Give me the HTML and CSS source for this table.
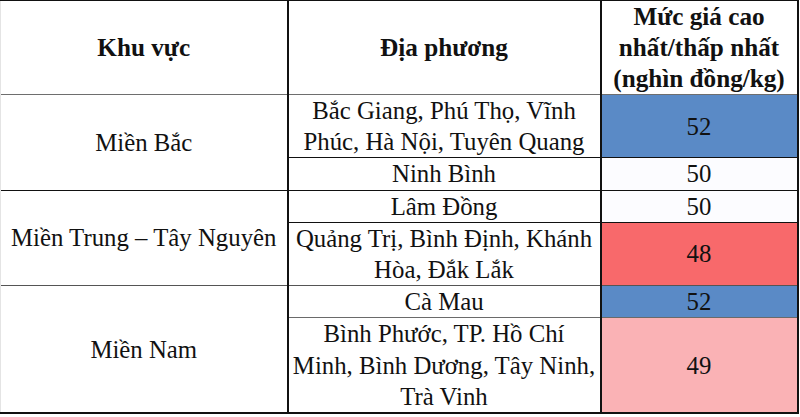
FILE: index.html
```html
<!DOCTYPE html>
<html lang="vi">
<head>
<meta charset="utf-8">
<link rel="stylesheet" href="styles.css">
</head>
<body>
<table class="price-table">
  <colgroup>
    <col class="c-region">
    <col class="c-local">
    <col class="c-price">
  </colgroup>
  <thead>
    <tr class="r-head">
      <th>Khu vực</th>
      <th>Địa phương</th>
      <th>Mức giá cao<br>nhất/thấp nhất<br>(nghìn đồng/kg)</th>
    </tr>
  </thead>
  <tbody>
    <tr>
      <td rowspan="2" class="region">Miền Bắc</td>
      <td>Bắc Giang, Phú Thọ, Vĩnh<br>Phúc, Hà Nội, Tuyên Quang</td>
      <td class="price p-max">52</td>
    </tr>
    <tr>
      <td>Ninh Bình</td>
      <td class="price p-mid">50</td>
    </tr>
    <tr class="grp">
      <td rowspan="2" class="region">Miền Trung – Tây Nguyên</td>
      <td>Lâm Đồng</td>
      <td class="price p-mid">50</td>
    </tr>
    <tr>
      <td>Quảng Trị, Bình Định, Khánh<br>Hòa, Đắk Lắk</td>
      <td class="price p-min">48</td>
    </tr>
    <tr class="grp grp-gray">
      <td rowspan="2" class="region">Miền Nam</td>
      <td>Cà Mau</td>
      <td class="price p-max">52</td>
    </tr>
    <tr class="sep-gray">
      <td>Bình Phước, TP. Hồ Chí<br>Minh, Bình Dương, Tây Ninh,<br>Trà Vinh</td>
      <td class="price p-low">49</td>
    </tr>
  </tbody>
</table>
</body>
</html>
```

FILE: styles.css
```css
html, body {
  margin: 0;
  padding: 0;
  background: #ffffff;
  font-family: "Liberation Serif", serif;
}

.price-table {
  table-layout: fixed;
  border-collapse: collapse;
  width: 797px;
  font-family: "Liberation Serif", serif;
  color: #111111;
  font-size: 24.8px;
  line-height: 31.2px;
  text-align: center;
  border-left: 1px solid #e4e4e4;
  border-top: 1px solid #ececec;
  border-right: 2px solid #111111;
  border-bottom: 2px solid #111111;
}

.c-region { width: 287px; }
.c-local { width: 313px; }
.c-price { width: 197px; }

th, td {
  padding: 0;
  vertical-align: middle;
  text-align: center;
  border-left: 2px solid #111111;
  border-top: 1px solid #111111;
}

th:first-child, .region {
  border-left: 1px solid #e4e4e4;
}

th {
  font-weight: bold;
  font-size: 25.2px;
  line-height: 31px;
}

tbody tr:first-child td {
  border-top: 1px solid #6e6e6e;
}

.sep-gray td {
  border-top: 1px solid #6a6a6a;
}

.grp td {
  border-top: 1px solid #111111;
}

.grp-gray td {
  border-top: 1px solid #555555;
}

.p-max { background: #5a8ac6; }
.p-mid { background: #fcfcff; }
.p-min { background: #f8696b; }
.p-low { background: #fab2b5; }
```
